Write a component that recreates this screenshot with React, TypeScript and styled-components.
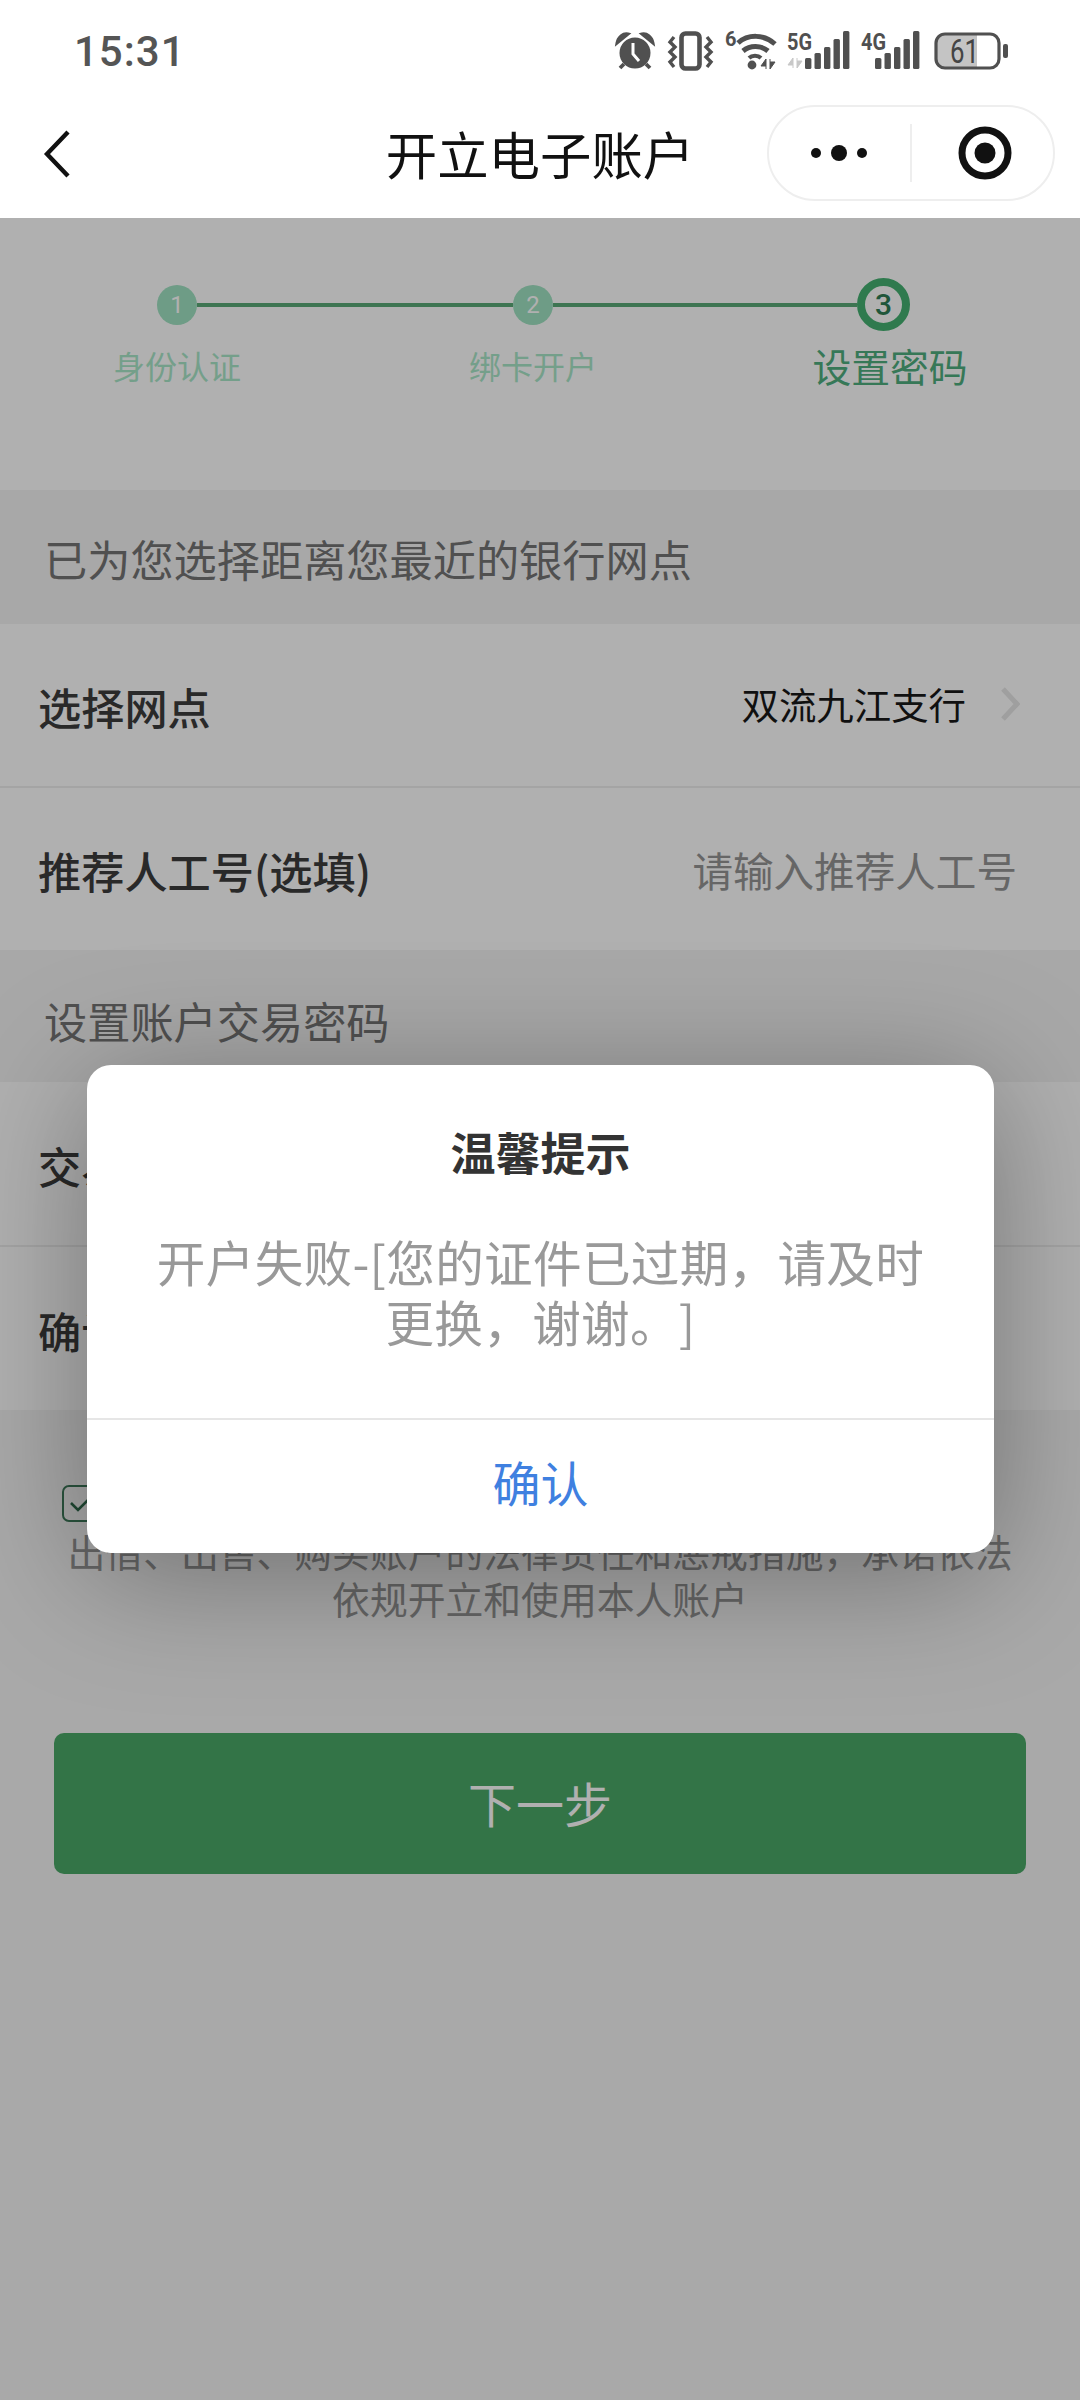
import React from "react";
import styled, { createGlobalStyle } from "styled-components";

const Global = createGlobalStyle`
  html, body { margin: 0; padding: 0; background: #f5f5f5; }
  * { box-sizing: border-box; }
  body { font-family: "Noto Sans CJK SC", "Noto Sans", sans-serif; text-spacing-trim: space-all; }
`;

const Screen = styled.div`
  position: relative;
  width: 1080px;
  height: 2400px;
  overflow: hidden;
  background: #f5f5f5;
`;

const Header = styled.header`
  height: 218px;
  background: #fff;
`;

const StatusBar = styled.div`
  height: 88px;
  padding: 14px 0 0 74px;
  display: flex;
  align-items: center;
  justify-content: space-between;
`;

const Time = styled.span`
  font-family: Roboto, "Liberation Sans", sans-serif;
  font-size: 42px;
  font-weight: 500;
  letter-spacing: 1px;
  color: #555;
`;

const StatusIcons = styled.div`
  display: flex;
  align-items: center;
  padding-right: 72px;
`;

const StatusIcon = styled.svg<{ $gap: number }>`
  display: block;
  margin-left: ${(p) => p.$gap}px;
  flex: none;
  overflow: visible;
`;

const Nav = styled.nav`
  height: 130px;
  display: grid;
  grid-template-columns: 1fr auto 1fr;
  align-items: center;
`;

const Back = styled.svg`
  margin: 2px 0 0 43px;
  display: block;
`;

const Title = styled.h1`
  margin: 0;
  font-size: 51.4px;
  line-height: 60px;
  font-weight: 400;
  color: #111;
`;

const Capsule = styled.div`
  justify-self: end;
  margin-right: 25px;
  width: 288px;
  height: 96px;
  border: 2px solid #eeeeee;
  border-radius: 48px;
  display: flex;
  align-items: center;
  padding-left: 41px;
`;

const Dots = styled.svg`
  display: block;
`;

const CapsuleDivider = styled.span`
  width: 2px;
  height: 58px;
  margin-left: 42px;
  background: #eeeeee;
`;

const Target = styled.svg`
  display: block;
  margin-left: 46px;
`;

const Body = styled.main``;

const Steps = styled.section`
  height: 272px;
  padding-top: 60px;
  background: #ffffff;
`;

const Track = styled.div`
  height: 53px;
  padding-left: 157px;
  display: flex;
  align-items: center;
`;

const Dot = styled.span`
  flex: none;
  width: 40px;
  height: 40px;
  border-radius: 50%;
  background: #a0e2c2;
  color: #fff;
  font-family: Roboto, "Liberation Sans", sans-serif;
  font-size: 24px;
  display: flex;
  align-items: center;
  justify-content: center;
`;

const CurrentDot = styled.span`
  flex: none;
  width: 53px;
  height: 53px;
  border-radius: 50%;
  border: 8px solid #44b171;
  color: #2f7d54;
  font-family: Roboto, "Liberation Sans", sans-serif;
  font-weight: 500;
  font-size: 30px;
  display: flex;
  align-items: center;
  justify-content: center;
`;

const Connector = styled.span<{ $width: number }>`
  flex: none;
  width: ${(p) => p.$width}px;
  height: 4px;
  background: #5baa78;
`;

const StepLabels = styled.div`
  margin-top: 16px;
  padding-left: 77px;
  display: grid;
  grid-template-columns: repeat(3, 200px);
  column-gap: 156px;
  align-items: center;
`;

const StepLabel = styled.span<{ $current?: boolean }>`
  text-align: center;
  line-height: 36px;
  font-size: ${(p) => (p.$current ? "38.8px" : "32px")};
  padding-left: ${(p) => (p.$current ? "2px" : "0")};
  color: ${(p) => (p.$current ? "#4fae7f" : "#a9e6c8")};
`;

const Band = styled.div<{ $height: number; $shift: number }>`
  height: ${(p) => p.$height}px;
  padding: ${(p) => p.$shift}px 0 0 44px;
  display: flex;
  align-items: center;
  background: #f3f3f3;
  font-size: 43.2px;
  color: #747474;
`;

const Row = styled.div<{ $height: number; $line?: boolean }>`
  height: ${(p) => p.$height}px;
  padding: 0 38px;
  display: flex;
  align-items: center;
  justify-content: space-between;
  background: #fff;
  border-bottom: ${(p) => (p.$line ? "2px solid #eeeeee" : "none")};
`;

const RowLabel = styled.span`
  font-size: 43.2px;
  font-weight: 500;
  color: #3c3c3c;
  padding-top: 2px;
`;

const RowValue = styled.span`
  display: flex;
  align-items: center;
  gap: 34px;
  font-size: 37.44px;
  color: #181818;
  padding-right: 22px;
  margin-top: -3px;
`;

const Placeholder = styled.span`
  font-size: 40.6px;
  color: #949494;
  padding-right: 25px;
`;

const Chevron = styled.svg`
  display: block;
`;

const Agreement = styled.section`
  padding: 70px 0 0;
  font-size: 37.8px;
  line-height: 47px;
  color: #949494;
  text-align: center;
`;

const AgreementHead = styled.div`
  display: flex;
  align-items: center;
  gap: 12px;
  height: 47px;
  padding-left: 62px;
`;

const Checkbox = styled.span`
  flex: none;
  width: 37px;
  height: 37px;
  border: 2px solid #3d7a5a;
  border-radius: 7px;
  display: flex;
  align-items: center;
  justify-content: center;
`;

const NextButton = styled.button`
  display: block;
  width: 972px;
  height: 141px;
  margin: 112px 0 0 54px;
  padding: 0 0 3px;
  border: none;
  border-radius: 10px;
  background: #4aa868;
  color: #fff;
  font-family: inherit;
  font-size: 48px;
`;

const Overlay = styled.div`
  position: absolute;
  left: 0;
  right: 0;
  top: 218px;
  bottom: 0;
  background: rgba(0, 0, 0, 0.31);
`;

const Dialog = styled.div`
  position: absolute;
  left: 87px;
  top: 847px;
  width: 907px;
  height: 488px;
  border-radius: 24px;
  background: #fff;
  box-shadow: 0 20px 130px rgba(0, 0, 0, 0.34);
  display: flex;
  flex-direction: column;
`;

const DialogTitle = styled.h2`
  margin: 55px 0 0;
  text-align: center;
  font-size: 45px;
  line-height: 64px;
  font-weight: 700;
  color: #333;
`;

const DialogMessage = styled.p`
  margin: 47px 0 0;
  padding: 0 62px;
  text-align: center;
  font-size: 48.6px;
  letter-spacing: 0.3px;
  line-height: 60px;
  color: #999;
`;

const DialogAction = styled.button`
  margin-top: auto;
  height: 135px;
  padding: 0 0 12px;
  border: none;
  border-top: 2px solid #e6e6e6;
  background: none;
  font-family: inherit;
  font-size: 48px;
  color: #3f80e0;
`;

const AlarmIcon = () => (
  <StatusIcon $gap={2} width="38" height="38" viewBox="0 0 38 38" fill="#505050">
    <circle cx="19" cy="21" r="15.5" />
    <path d="M1 11C2 5 7 1 12 2L1 11ZM37 11C36 5 31 1 26 2L37 11Z" stroke="#505050" strokeWidth="3" />
    <path d="M8 32l-4 4M30 32l4 4" stroke="#505050" strokeWidth="3.8" />
    <path d="M17 11v11l6 7" stroke="#fff" strokeWidth="3" fill="none" />
  </StatusIcon>
);

const VibrateIcon = () => (
  <StatusIcon $gap={14} width="45" height="40" viewBox="0 0 45 40" fill="none" stroke="#505050">
    <rect x="13.5" y="2.5" width="18" height="35" rx="4" strokeWidth="4.6" />
    <path d="M6 6L2 11L7 16L2 21L7 26L2 31L6 36" strokeWidth="3.4" />
    <path d="M39 6L43 11L38 16L43 21L38 26L43 31L39 36" strokeWidth="3.4" />
  </StatusIcon>
);

const WifiIcon = () => (
  <StatusIcon $gap={12} width="52" height="40" viewBox="0 0 52 40" fill="none" stroke="#505050">
    <text x="0" y="15" fontFamily="Roboto, sans-serif" fontWeight="700" fontSize="20" fill="#505050" stroke="none">6</text>
    <path d="M13 12C23 3 39 3 50 13" strokeWidth="5" />
    <path d="M18 20C25 14 36 14 43 20" strokeWidth="5" />
    <path d="M24 27C27 24 33 24 36 27" strokeWidth="4" />
    <circle cx="27" cy="34" r="4.4" fill="#505050" stroke="none" />
    <path d="M41 38V28L36 35H41M45 28V38L50 31H45" fill="#505050" stroke="#505050" strokeWidth="1" />
  </StatusIcon>
);

const Bars = ({ x, tall }: { x: number; tall: number[] }) => (
  <>
    {tall.map((h, i) => (
      <rect key={i} x={x + i * 9.5} y={38 - h} width="6.4" height={h} rx="1.5" fill="#505050" />
    ))}
  </>
);

const FiveGIcon = () => (
  <StatusIcon $gap={10} width="62" height="40" viewBox="0 0 62 40">
    <text x="0" y="19" fontFamily="Roboto, sans-serif" fontWeight="700" fontSize="24" textLength="25" lengthAdjust="spacingAndGlyphs" fill="#505050">5G</text>
    <path d="M6 37V27L1 34H6M10 27V37L15 30H10" fill="#c8c8c8" stroke="#c8c8c8" />
    <Bars x={18} tall={[11, 16, 22, 30, 38]} />
  </StatusIcon>
);

const FourGIcon = () => (
  <StatusIcon $gap={12} width="57" height="40" viewBox="0 0 57 40">
    <text x="0" y="19" fontFamily="Roboto, sans-serif" fontWeight="700" fontSize="24" textLength="25" lengthAdjust="spacingAndGlyphs" fill="#505050">4G</text>
    <Bars x={14} tall={[11, 16, 22, 30, 38]} />
  </StatusIcon>
);

const BatteryIcon = () => (
  <StatusIcon $gap={16} width="74" height="40" viewBox="0 0 74 40">
    <path d="M10 3H43V37H10a8 8 0 0 1-8-8V11a8 8 0 0 1 8-8Z" fill="#c4c4c4" />
    <rect x="2" y="3" width="63" height="34" rx="9" fill="none" stroke="#505050" strokeWidth="3.2" />
    <rect x="69" y="13" width="5" height="14" rx="2" fill="#505050" />
    <text x="16" y="32" fontFamily="Roboto, sans-serif" fontWeight="400" fontSize="34" textLength="29" lengthAdjust="spacingAndGlyphs" fill="#444">61</text>
  </StatusIcon>
);

export default function App() {
  return (
    <Screen>
      <Global />
      <Header>
        <StatusBar>
          <Time>15:31</Time>
          <StatusIcons>
            <AlarmIcon />
            <VibrateIcon />
            <WifiIcon />
            <FiveGIcon />
            <FourGIcon />
            <BatteryIcon />
          </StatusIcons>
        </StatusBar>
        <Nav>
          <Back width="28" height="48" viewBox="0 0 28 48" fill="none" stroke="#111" strokeWidth="4.4">
            <path d="M25 2L4 24L25 46" />
          </Back>
          <Title>开立电子账户</Title>
          <Capsule>
            <Dots width="58" height="18" viewBox="0 0 58 18" fill="#111">
              <circle cx="6" cy="9" r="5" />
              <circle cx="29" cy="9" r="8" />
              <circle cx="52" cy="9" r="5" />
            </Dots>
            <CapsuleDivider />
            <Target width="54" height="54" viewBox="0 0 54 54">
              <circle cx="27" cy="27" r="23" fill="none" stroke="#111" strokeWidth="7" />
              <circle cx="27" cy="27" r="10.5" fill="#111" />
            </Target>
          </Capsule>
        </Nav>
      </Header>
      <Body>
        <Steps>
          <Track>
            <Dot>1</Dot>
            <Connector $width={316} />
            <Dot>2</Dot>
            <Connector $width={304} />
            <CurrentDot>3</CurrentDot>
          </Track>
          <StepLabels>
            <StepLabel>身份认证</StepLabel>
            <StepLabel>绑卡开户</StepLabel>
            <StepLabel $current>设置密码</StepLabel>
          </StepLabels>
        </Steps>
        <Band $height={134} $shift={2}>已为您选择距离您最近的银行网点</Band>
        <Row $height={164} $line>
          <RowLabel>选择网点</RowLabel>
          <RowValue>
            双流九江支行
            <Chevron width="20" height="36" viewBox="0 0 20 36" fill="none" stroke="#e6e6e6" strokeWidth="5">
              <path d="M3 3L17 18L3 33" />
            </Chevron>
          </RowValue>
        </Row>
        <Row $height={162}>
          <RowLabel>推荐人工号(选填)</RowLabel>
          <Placeholder>请输入推荐人工号</Placeholder>
        </Row>
        <Band $height={132} $shift={8}>设置账户交易密码</Band>
        <Row $height={165} $line>
          <RowLabel>交易密码</RowLabel>
        </Row>
        <Row $height={163}>
          <RowLabel>确认密码</RowLabel>
        </Row>
        <Agreement>
          <AgreementHead>
            <Checkbox>
              <svg width="24" height="18" viewBox="0 0 24 18" fill="none" stroke="#2f6a4c" strokeWidth="2.6">
                <path d="M2 8L9 15L22 2" />
              </svg>
            </Checkbox>
            本人已了解买卖账户的风险
          </AgreementHead>
          <div>出借、出售、购买账户的法律责任和惩戒措施，承诺依法</div>
          <div>依规开立和使用本人账户</div>
        </Agreement>
        <NextButton>下一步</NextButton>
      </Body>
      <Overlay>
        <Dialog>
          <DialogTitle>温馨提示</DialogTitle>
          <DialogMessage>开户失败-[您的证件已过期，请及时更换，谢谢。]</DialogMessage>
          <DialogAction>确认</DialogAction>
        </Dialog>
      </Overlay>
    </Screen>
  );
}
